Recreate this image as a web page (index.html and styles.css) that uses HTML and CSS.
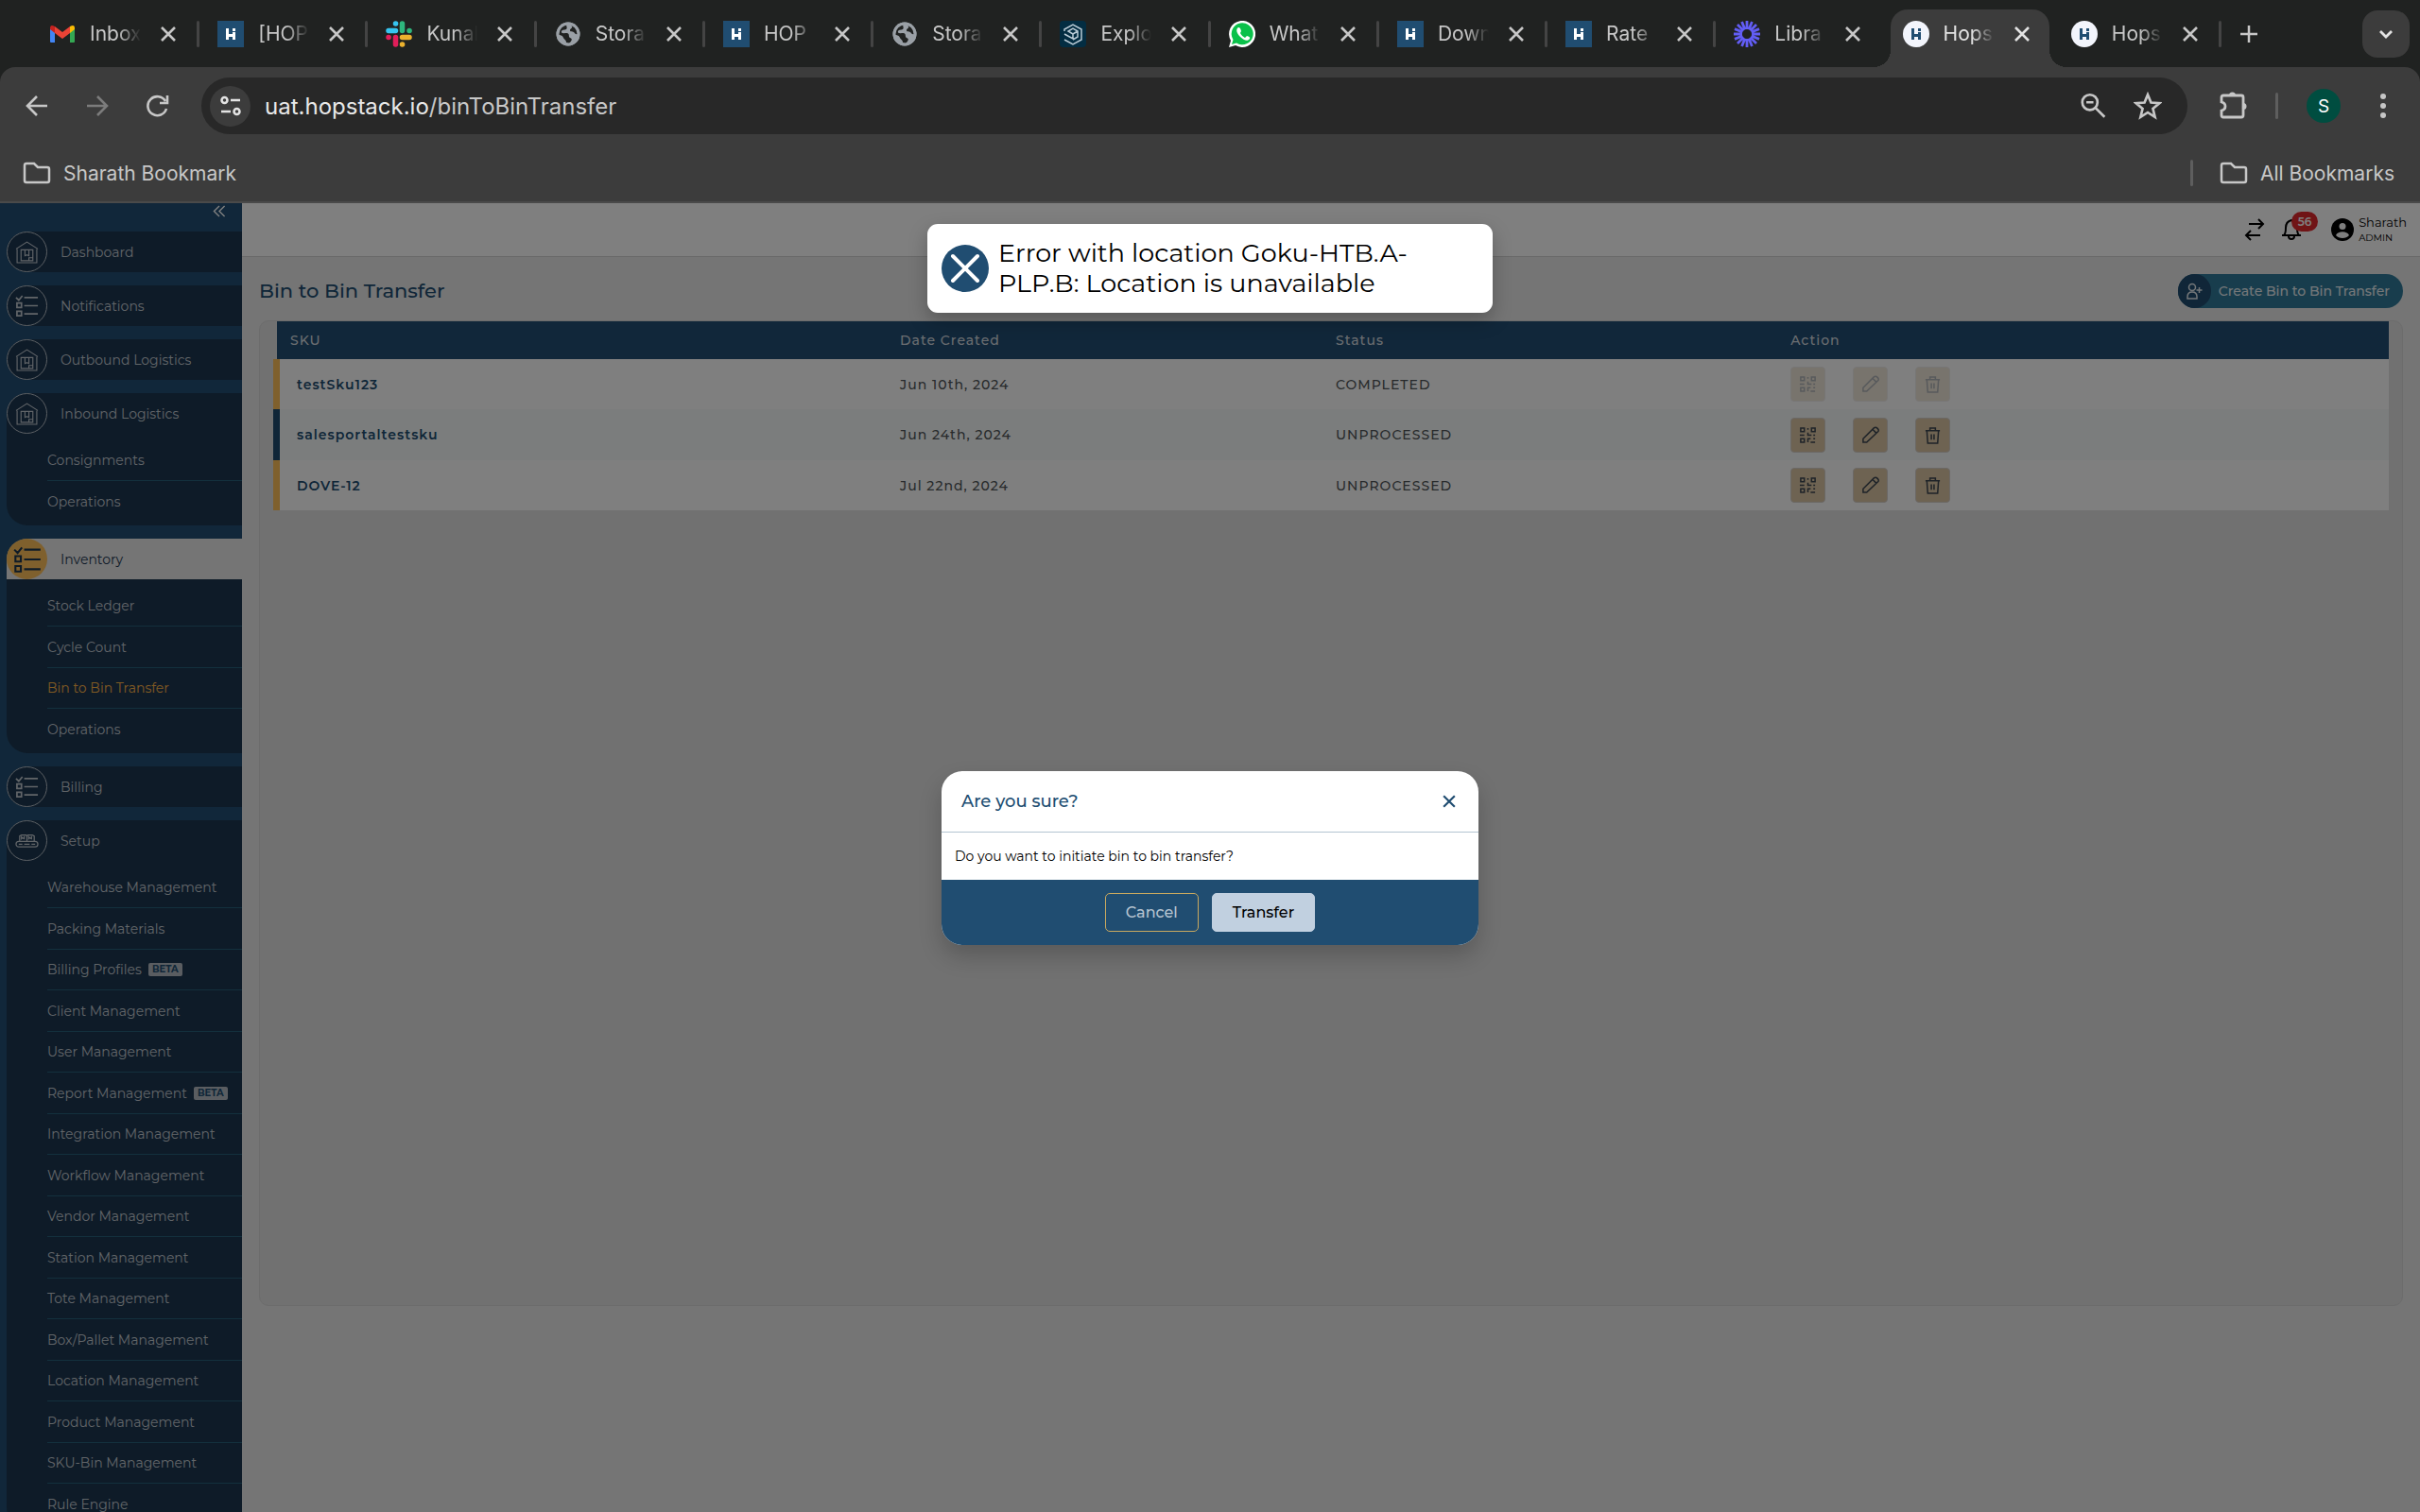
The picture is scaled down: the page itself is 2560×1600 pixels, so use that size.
FILE: index.html
```html
<!DOCTYPE html>
<html lang="en">
<head>
    <meta charset="UTF-8">
    <meta name="viewport" content="width=device-width, initial-scale=1.0">
    <title>Bin to Bin Transfer</title>
    <link rel="stylesheet" href="styles.css">
</head>
<body>

    <!-- icons used more than once -->
    <svg class="sprite" aria-hidden="true">
        <symbol id="hop" viewBox="0 0 28 28">
            <path d="M9 8h3v12H9zM16 12h3v8h-3zM9 14h10v3H9zM16 8h3v3h-3z"/>
        </symbol>
        <symbol id="close" viewBox="0 0 24 24">
            <path d="M5 5l14 14M19 5L5 19" fill="none" stroke="currentColor" stroke-width="2.600"/>
        </symbol>
        <symbol id="globe" viewBox="0 0 28 28">
            <circle cx="14" cy="14" r="12.500" fill="#9aa0a6"/>
            <path d="M13 3c-2 3 1 4-1 6-2 1-4 0-5 2-1 3 3 2 6 2 3 1 1 4 3 5 3 1 2 3-1 6l-3-1c0-3-2-3-3-5-1-3-4-3-5-3-1-6 3-12 9-12zM17 4c5 2 7 6 7 10-2 1-3-1-4-2-2-1-4 0-4-2s3-2 2-4z" fill="#202221"/>
            <circle cx="14" cy="14" r="11" fill="none" stroke="#9aa0a6" stroke-width="3"/>
        </symbol>
        <symbol id="folder" viewBox="0 0 30 24">
            <path d="M2 4q0-2 2-2h8l4 4h10q2 0 2 2v12q0 2-2 2H4q-2 0-2-2z" fill="none" stroke="currentColor" stroke-width="2.500"/>
        </symbol>
        <symbol id="house" viewBox="0 0 24 24">
            <path d="M1 9L12 2l11 7M2 9v14h20V9M6 21V10h12v11zM10 10v6l2-1 2 1v-6M14 18h4v3h-4z" fill="none" stroke="currentColor" stroke-width="1.100"/>
        </symbol>
        <symbol id="list" viewBox="0 0 26 26">
            <path d="M1 4l3 3 4-5M10 4h15M10 13h15M10 22h15M2 10h5v5H2zM2 19h5v5H2z" fill="none" stroke="currentColor" stroke-width="1.800"/>
        </symbol>
        <symbol id="boxes" viewBox="0 0 26 26">
            <rect x="1" y="14" width="24" height="6" rx="3" fill="none" stroke="currentColor" stroke-width="1.300"/>
            <path d="M5 14V8l2-1h5l1 1v6M13 8l1-1h5l2 1v6M7 8v3l1-1 2 1V8M15 8v3l1-1 2 1V8M4 17h4M10 17h6M18 17h4" fill="none" stroke="currentColor" stroke-width="1.300"/>
        </symbol>
        <symbol id="qr" viewBox="0 0 20 20">
            <path d="M2 2h4v4H2zM14 2h4v4h-4zM2 14h4v4H2zM10 2v2M10 7v3h4M1 10h5M16 10h2M10 18v-4h3M16 14h2M13 18h5" fill="none" stroke="currentColor" stroke-width="1.600"/>
        </symbol>
        <symbol id="pencil" viewBox="0 0 20 20">
            <path d="M2 18v-4L14 2q2-1.500 4 .5t.5 3.500L6 18zM12.500 3.500l4 4" fill="none" stroke="currentColor" stroke-width="1.600"/>
        </symbol>
        <symbol id="trash" viewBox="0 0 20 20">
            <path d="M2 5h16M3.500 5l1 14h11l1-14M7 5V2h6v3M8.500 9v6M11.500 9v6" fill="none" stroke="currentColor" stroke-width="1.600"/>
        </symbol>
    </svg>

    <header class="browser">
        <div class="tabstrip">
            <div class="tabs">
                <div class="tab">
                    <svg class="favicon" viewBox="0 0 28 28"><path d="M1 7v15q0 1 1 1h4V12z" fill="#4285f4"/><path d="M27 7v15q0 1-1 1h-4V12z" fill="#34a853"/><path d="M6 6l8 6 8-6v7l-8 6-8-6z" fill="#ea4335"/><path d="M1 8q0-5 5-2v7L1 9z" fill="#c5221f"/><path d="M27 8q0-5-5-2v7l5-4z" fill="#fbbc04"/></svg>
                    <span class="tab-title">Inbox</span>
                    <button class="tab-close" aria-label="Close tab"><svg><use href="#close"/></svg></button>
                </div>
                <div class="tab">
                    <svg class="favicon hop"><use href="#hop"/></svg>
                    <span class="tab-title">[HOP</span>
                    <button class="tab-close" aria-label="Close tab"><svg><use href="#close"/></svg></button>
                </div>
                <div class="tab">
                    <svg class="favicon" viewBox="0 0 28 28" fill="none" stroke-width="5.500" stroke-linecap="round"><path d="M10.500 3h.1M3 10.500h7.500" stroke="#36c5f0"/><path d="M17.500 3v7.500M25 10.500h.1" stroke="#2eb67d"/><path d="M25 17.500h-7.500M17.500 25h.1" stroke="#ecb22e"/><path d="M10.500 25v-7.500M3 17.500h.1" stroke="#e01e5a"/></svg>
                    <span class="tab-title">Kunal</span>
                    <button class="tab-close" aria-label="Close tab"><svg><use href="#close"/></svg></button>
                </div>
                <div class="tab">
                    <svg class="favicon"><use href="#globe"/></svg>
                    <span class="tab-title">Stora</span>
                    <button class="tab-close" aria-label="Close tab"><svg><use href="#close"/></svg></button>
                </div>
                <div class="tab">
                    <svg class="favicon hop"><use href="#hop"/></svg>
                    <span class="tab-title">HOP</span>
                    <button class="tab-close" aria-label="Close tab"><svg><use href="#close"/></svg></button>
                </div>
                <div class="tab">
                    <svg class="favicon"><use href="#globe"/></svg>
                    <span class="tab-title">Stora</span>
                    <button class="tab-close" aria-label="Close tab"><svg><use href="#close"/></svg></button>
                </div>
                <div class="tab">
                    <svg class="favicon" viewBox="0 0 28 28"><rect width="28" height="28" rx="4" fill="#032d42"/><path d="M5 11v-2l9-5 9 5v11l-9 5-9-5M5 14l9 5v-5l-5-3 5-3 5 3v6l-5 3M14 14l5-3" fill="none" stroke="#b9cbd6" stroke-width="1.500"/></svg>
                    <span class="tab-title">Explo</span>
                    <button class="tab-close" aria-label="Close tab"><svg><use href="#close"/></svg></button>
                </div>
                <div class="tab">
                    <svg class="favicon" viewBox="0 0 28 28"><path d="M0 28l2-7A14 14 0 1 1 7 26z" fill="#fff"/><path d="M3 25l1.500-5A11.500 11.500 0 1 1 8 23.500z" fill="#0ac14a"/><path d="M10 7c-3 2-2 6 2 10s8 5 10 2c1-2-1-2-3-3l-2 2c-2-1-4-3-5-5l1-2c-1-3-1-4-3-4z" fill="#fff"/></svg>
                    <span class="tab-title">What</span>
                    <button class="tab-close" aria-label="Close tab"><svg><use href="#close"/></svg></button>
                </div>
                <div class="tab">
                    <svg class="favicon hop"><use href="#hop"/></svg>
                    <span class="tab-title">Down</span>
                    <button class="tab-close" aria-label="Close tab"><svg><use href="#close"/></svg></button>
                </div>
                <div class="tab">
                    <svg class="favicon hop"><use href="#hop"/></svg>
                    <span class="tab-title">Rate</span>
                    <button class="tab-close" aria-label="Close tab"><svg><use href="#close"/></svg></button>
                </div>
                <div class="tab">
                    <svg class="favicon" viewBox="0 0 28 28" stroke="#625df5" stroke-width="2.800"><path d="M14 0v9M14 19v9M0 14h9M19 14h9M4 4l6.500 6.500M17.500 17.500L24 24M24 4l-6.500 6.500M10.500 17.500L4 24M8.600 1l3.400 8.400M16 18.600l3.400 8.400M1 8.600l8.400 3.400M18.600 16l8.400 3.400M19.400 1L16 9.400M12 18.600L8.600 27M27 8.600L18.600 12M9.400 16L1 19.400"/></svg>
                    <span class="tab-title">Libra</span>
                    <button class="tab-close" aria-label="Close tab"><svg><use href="#close"/></svg></button>
                </div>
                <div class="tab active">
                    <svg class="favicon hop round"><use href="#hop"/></svg>
                    <span class="tab-title">Hops</span>
                    <button class="tab-close" aria-label="Close tab"><svg><use href="#close"/></svg></button>
                </div>
                <div class="tab">
                    <svg class="favicon hop round"><use href="#hop"/></svg>
                    <span class="tab-title">Hops</span>
                    <button class="tab-close" aria-label="Close tab"><svg><use href="#close"/></svg></button>
                </div>
            </div>
            <div class="tabs-end">
                <button class="new-tab" aria-label="New tab"><svg viewBox="0 0 20 20"><path d="M10 1v18M1 10h18" stroke="currentColor" stroke-width="2.500"/></svg></button>
                <button class="tab-search" aria-label="Search tabs"><svg viewBox="0 0 20 20"><path d="M4 7l6 6 6-6" fill="none" stroke="currentColor" stroke-width="2.800"/></svg></button>
            </div>
        </div>

        <div class="toolbar">
            <nav class="nav-buttons">
                <button aria-label="Back"><svg viewBox="0 0 24 24"><path d="M23 12H3M12 2L2 12l10 10"/></svg></button>
                <button class="off" aria-label="Forward"><svg viewBox="0 0 24 24"><path d="M1 12h20M12 2l10 10-10 10"/></svg></button>
                <button aria-label="Reload"><svg viewBox="0 0 24 24"><path d="M21 15a10 10 0 1 1-1-8M22 1v8h-8"/></svg></button>
            </nav>
            <div class="omnibox">
                <button class="site-info" aria-label="Site information"><svg viewBox="0 0 22 22" fill="none" stroke="currentColor" stroke-width="2.500"><circle cx="4.500" cy="5" r="3"/><path d="M11 5h10M1 17h10"/><circle cx="17.500" cy="17" r="3"/></svg></button>
                <p class="url">uat.hopstack.io<span>/binToBinTransfer</span></p>
                <button aria-label="Zoom"><svg viewBox="0 0 28 28"><circle cx="11" cy="10.500" r="7.500"/><path d="M16.500 16l9 9M7.500 10.500h7"/></svg></button>
                <button aria-label="Bookmark"><svg viewBox="0 0 28 28"><path d="M14 3l3.200 7.800 8.300.6-6.400 5.400 2 8.200-7.100-4.500L6.900 25l2-8.200-6.400-5.400 8.300-.6z"/></svg></button>
            </div>
            <button class="extensions" aria-label="Extensions"><svg viewBox="0 0 30 30"><path d="M3 6q0-2 2-2h19q2 0 2 2v19q0 2-2 2H5q-2 0-2-2v-5q4-1 4-4.500T3 11z" fill="none" stroke="currentColor" stroke-width="2.800"/><path d="M11 4a3.500 3.500 0 0 1 7 0zM26 12a3.500 3.500 0 0 1 0 7z" fill="currentColor"/></svg></button>
            <span class="divider"></span>
            <button class="avatar">S</button>
            <button class="menu" aria-label="Menu"><svg viewBox="0 0 8 28"><circle cx="4" cy="4" r="3"/><circle cx="4" cy="14" r="3"/><circle cx="4" cy="24" r="3"/></svg></button>
        </div>

        <div class="bookmarks">
            <button><svg><use href="#folder"/></svg>Sharath Bookmark</button>
            <span class="divider"></span>
            <button><svg><use href="#folder"/></svg>All Bookmarks</button>
        </div>
    </header>

    <div class="app">
        <aside class="sidebar">
            <button class="collapse" aria-label="Collapse"><svg viewBox="0 0 14 14"><path d="M7 1L1 7l6 6M13 1L7 7l6 6" fill="none" stroke="currentColor" stroke-width="1.500"/></svg></button>

            <section class="group">
                <a class="group-head" href="#"><span class="circle"><svg><use href="#house"/></svg></span>Dashboard</a>
            </section>
            <section class="group">
                <a class="group-head" href="#"><span class="circle"><svg><use href="#list"/></svg></span>Notifications</a>
            </section>
            <section class="group">
                <a class="group-head" href="#"><span class="circle"><svg><use href="#house"/></svg></span>Outbound Logistics</a>
            </section>
            <section class="group">
                <a class="group-head" href="#"><span class="circle"><svg><use href="#house"/></svg></span>Inbound Logistics</a>
                <ul>
                    <li><a href="#">Consignments</a></li>
                    <li><a href="#">Operations</a></li>
                </ul>
            </section>
            <section class="group open">
                <a class="group-head" href="#"><span class="circle"><svg><use href="#list"/></svg></span>Inventory</a>
                <ul>
                    <li><a href="#">Stock Ledger</a></li>
                    <li><a href="#">Cycle Count</a></li>
                    <li><a class="current" href="#">Bin to Bin Transfer</a></li>
                    <li><a href="#">Operations</a></li>
                </ul>
            </section>
            <section class="group">
                <a class="group-head" href="#"><span class="circle"><svg><use href="#list"/></svg></span>Billing</a>
            </section>
            <section class="group">
                <a class="group-head" href="#"><span class="circle"><svg><use href="#boxes"/></svg></span>Setup</a>
                <ul>
                    <li><a href="#">Warehouse Management</a></li>
                    <li><a href="#">Packing Materials</a></li>
                    <li><a href="#">Billing Profiles</a><span class="beta">BETA</span></li>
                    <li><a href="#">Client Management</a></li>
                    <li><a href="#">User Management</a></li>
                    <li><a href="#">Report Management</a><span class="beta">BETA</span></li>
                    <li><a href="#">Integration Management</a></li>
                    <li><a href="#">Workflow Management</a></li>
                    <li><a href="#">Vendor Management</a></li>
                    <li><a href="#">Station Management</a></li>
                    <li><a href="#">Tote Management</a></li>
                    <li><a href="#">Box/Pallet Management</a></li>
                    <li><a href="#">Location Management</a></li>
                    <li><a href="#">Product Management</a></li>
                    <li><a href="#">SKU-Bin Management</a></li>
                    <li><a href="#">Rule Engine</a></li>
                </ul>
            </section>
        </aside>

        <main class="content">
            <div class="topbar">
                <button class="swap" aria-label="Switch"><svg viewBox="0 0 22 24"><path d="M5 6h15M15 1l5 5-5 5M17 18H2M7 13l-5 5 5 5"/></svg></button>
                <button class="bell" aria-label="Alerts"><svg viewBox="0 0 22 24"><path d="M1 18h20M3 18c2-2 2-4 2-8 0-5 2-7 6-8 4 1 6 3 6 8 0 4 0 6 2 8M8 19q0 3 3 3t3-3"/></svg><span class="count">56</span></button>
                <svg class="account" viewBox="0 0 24 24"><circle cx="12" cy="12" r="12"/><circle cx="12" cy="8.500" r="3.500" fill="#fff"/><path d="M5 18c2-5 12-5 14 0-3 4-11 4-14 0z" fill="#fff"/></svg>
                <div class="user">
                    <p class="user-name">Sharath</p>
                    <p class="user-role">ADMIN</p>
                </div>
            </div>

            <div class="page-head">
                <h1>Bin to Bin Transfer</h1>
                <button class="create"><span class="create-icon"><svg viewBox="0 0 18 18"><circle cx="7" cy="5" r="3.500"/><path d="M2 17v-2q0-5 5-5t5 5v2zM14.500 5v6M11.500 8h6"/></svg></span>Create Bin to Bin Transfer</button>
            </div>

            <div class="panel">
                <table>
                    <thead>
                        <tr>
                            <th class="col-sku">SKU</th>
                            <th class="col-date">Date Created</th>
                            <th class="col-status">Status</th>
                            <th>Action</th>
                        </tr>
                    </thead>
                    <tbody>
                        <tr>
                            <td class="sku">testSku123</td>
                            <td>Jun 10th, 2024</td>
                            <td>COMPLETED</td>
                            <td><div class="actions">
                                <button disabled aria-label="Scan"><svg><use href="#qr"/></svg></button>
                                <button disabled aria-label="Edit"><svg><use href="#pencil"/></svg></button>
                                <button disabled aria-label="Delete"><svg><use href="#trash"/></svg></button>
                            </div></td>
                        </tr>
                        <tr>
                            <td class="sku">salesportaltestsku</td>
                            <td>Jun 24th, 2024</td>
                            <td>UNPROCESSED</td>
                            <td><div class="actions">
                                <button aria-label="Scan"><svg><use href="#qr"/></svg></button>
                                <button aria-label="Edit"><svg><use href="#pencil"/></svg></button>
                                <button aria-label="Delete"><svg><use href="#trash"/></svg></button>
                            </div></td>
                        </tr>
                        <tr>
                            <td class="sku">DOVE-12</td>
                            <td>Jul 22nd, 2024</td>
                            <td>UNPROCESSED</td>
                            <td><div class="actions">
                                <button aria-label="Scan"><svg><use href="#qr"/></svg></button>
                                <button aria-label="Edit"><svg><use href="#pencil"/></svg></button>
                                <button aria-label="Delete"><svg><use href="#trash"/></svg></button>
                            </div></td>
                        </tr>
                    </tbody>
                </table>
            </div>
        </main>

        <div class="overlay">
            <div class="modal" role="dialog" aria-labelledby="modal-title">
                <div class="modal-head">
                    <h2 id="modal-title">Are you sure?</h2>
                    <button aria-label="Close"><svg><use href="#close"/></svg></button>
                </div>
                <p class="modal-body">Do you want to initiate bin to bin transfer?</p>
                <div class="modal-foot">
                    <button class="cancel">Cancel</button>
                    <button class="confirm">Transfer</button>
                </div>
            </div>
        </div>

        <div class="toast" role="alert">
            <svg viewBox="0 0 50 50"><circle cx="25" cy="25" r="25" fill="#204d71"/><path d="M12 12l26 26M38 12L12 38" stroke="#fff" stroke-width="4" stroke-linecap="round"/></svg>
            <p>Error with location Goku-HTB.A-<br>PLP.B: Location is unavailable</p>
        </div>
    </div>

</body>
</html>
```
FILE: styles.css
```css
* {
    box-sizing: border-box;
}

body {
    margin: 0;
    height: 100vh;
    display: flex;
    flex-direction: column;
    overflow: hidden;
    font-family: Montserrat, Inter, sans-serif;
    font-size: 14px;
    color: #000;
}

h1, h2, p, ul {
    margin: 0;
    padding: 0;
}

button {
    font: inherit;
    color: inherit;
    background: none;
    border: none;
    padding: 0;
    display: flex;
    align-items: center;
    justify-content: center;
}

a {
    color: inherit;
    text-decoration: none;
}

.sprite {
    position: absolute;
    width: 0;
    height: 0;
}

/* browser bars */

.browser {
    flex: none;
    background: #202221;
    color: #c7c7c7;
    font-family: Inter, sans-serif;
    font-size: 21px;
}

.tabstrip {
    height: 71px;
    display: flex;
    padding-left: 33px;
}

.tabs {
    flex: 1;
    display: flex;
}

.tab {
    flex: 1 1 0;
    position: relative;
    z-index: 0;
    display: flex;
    align-items: center;
    padding-left: 19px;
}

.tab::after {
    content: "";
    position: absolute;
    right: 0;
    top: 22px;
    width: 3px;
    height: 28px;
    border-radius: 2px;
    background: #444;
}

.favicon {
    width: 28px;
    height: 28px;
    flex: none;
}

.hop {
    background: #204d71;
    fill: #fff;
}

.hop.round {
    background: #f3f5fc;
    fill: #204d71;
    border-radius: 50%;
}

.tab-title {
    width: 54px;
    margin-left: 15px;
    overflow: hidden;
    white-space: nowrap;
    -webkit-mask-image: linear-gradient(to right, #000 55%, transparent);
    mask-image: linear-gradient(to right, #000 55%, transparent);
}

.tab-close {
    margin-left: 17px;
}

.tab-close svg {
    width: 24px;
    height: 24px;
}

.tab.active {
    color: #e3e3e3;
}

.tab.active::before {
    content: "";
    position: absolute;
    z-index: -1;
    inset: 10px 4px 0 6px;
    border-radius: 18px 18px 0 0;
    background: #3c3c3c;
}

/* flared feet of the open tab */
.tab.active::after {
    z-index: -1;
    left: -12px;
    right: -14px;
    top: 53px;
    width: auto;
    height: 18px;
    border-radius: 0;
    background:
        radial-gradient(circle at 0 0, transparent 18px, #3c3c3c 18px) left / 18px 18px no-repeat,
        radial-gradient(circle at 100% 0, transparent 18px, #3c3c3c 18px) right / 18px 18px no-repeat;
}

.tab:has(+ .active)::after {
    display: none;
}

.tabs-end {
    width: 210px;
    display: flex;
    align-items: center;
    justify-content: space-between;
    padding: 0 11px 0 19px;
}

.new-tab svg {
    width: 20px;
    height: 20px;
}

.tab-search {
    width: 50px;
    height: 50px;
    border-radius: 16px;
    background: #3c3c3c;
    color: #e3e3e3;
}

.tab-search svg {
    width: 20px;
    height: 20px;
}

.toolbar {
    display: flex;
    align-items: center;
    height: 82px;
    padding: 0 35px 0 27px;
    background: #3c3c3c;
    border-radius: 16px 16px 0 0;
}

.nav-buttons {
    display: flex;
    gap: 40px;
    margin-right: 34px;
}

.nav-buttons svg {
    width: 24px;
    height: 24px;
    fill: none;
    stroke: currentColor;
    stroke-width: 2.6;
}

.nav-buttons .off {
    color: #7c7c7c;
}

.omnibox {
    flex: 1;
    display: flex;
    align-items: center;
    gap: 28px;
    height: 60px;
    padding: 0 27px 0 9px;
    border-radius: 30px;
    background: #282828;
}

.omnibox svg {
    width: 30px;
    height: 30px;
    fill: none;
    stroke: currentColor;
    stroke-width: 2.5;
}

.omnibox .site-info {
    width: 43px;
    height: 43px;
    margin-right: -13px;
    border-radius: 50%;
    background: #3c3c3c;
    color: #e3e3e3;
}

.omnibox .site-info svg {
    width: 22px;
    height: 22px;
}

.url {
    flex: 1;
    font-size: 24px;
    color: #e8e8e8;
}

.url span {
    color: #c7c7c7;
}

.extensions {
    margin-left: 33px;
}

.extensions svg {
    width: 30px;
    height: 30px;
}

.divider {
    width: 3px;
    height: 28px;
    border-radius: 2px;
    background: #5e5e5e;
}

.toolbar .divider {
    margin: 0 30px;
}

.avatar {
    width: 36px;
    height: 36px;
    border-radius: 50%;
    background: #004d40;
    color: #fff;
    font-size: 19px;
}

.menu {
    margin-left: 41px;
}

.menu svg {
    width: 8px;
    height: 28px;
    fill: currentColor;
}

.bookmarks {
    display: flex;
    align-items: center;
    height: 62px;
    padding: 0 27px 0 24px;
    background: #3c3c3c;
    border-bottom: 2px solid #4a4a4a;
}

.bookmarks button {
    gap: 13px;
}

.bookmarks svg {
    width: 30px;
    height: 24px;
}

.bookmarks .divider {
    margin: 0 28px 0 auto;
}

/* application */

.app {
    flex: 1;
    min-height: 0;
    position: relative;
    display: flex;
    background: #eaeaea;
}

.sidebar {
    width: 256px;
    flex: none;
    overflow: hidden;
    padding-left: 7px;
    background: #234f74;
    color: #c3cad1;
}

.collapse {
    height: 16px;
    margin: 0 17px 14px auto;
    color: #fff;
}

.collapse svg {
    width: 14px;
    height: 13px;
}

.group {
    margin-bottom: 14px;
    background: #1c3650;
    border-radius: 22px 0 0 22px;
}

.group-head {
    display: flex;
    align-items: center;
    gap: 14px;
    height: 43px;
}

.circle {
    display: flex;
    align-items: center;
    justify-content: center;
    width: 43px;
    height: 43px;
    border: 1px solid #b8c0c8;
    border-radius: 50%;
    background: #1c3650;
}

.circle svg {
    width: 25px;
    height: 25px;
}

.group ul {
    list-style: none;
    padding: 7px 0 3px 43px;
}

.group li {
    display: flex;
    align-items: center;
    gap: 7px;
    height: 44px;
    border-bottom: 1px solid #26607b;
}

.group li:nth-child(odd) {
    height: 43px;
}

.group li:last-child {
    border-bottom: none;
}

.open .group-head {
    background: #eaeaea;
    color: #1c3650;
    border-radius: 22px 0 0 0;
}

.open .circle {
    border: none;
    background: #ffc05a;
}

.open .circle svg {
    width: 30px;
    height: 30px;
}

.group .current {
    color: #ffb547;
}

.beta {
    padding: 0 4px;
    border-radius: 2px;
    background: #b4bbc2;
    color: #204d71;
    font-size: 10px;
    font-weight: 700;
    line-height: 14px;
}

.content {
    flex: 1;
    min-width: 0;
}

.topbar {
    display: flex;
    align-items: center;
    justify-content: flex-end;
    height: 57px;
    padding-right: 14px;
    background: #fff;
    border-bottom: 1px solid #d0d0d0;
}

.topbar button svg {
    width: 22px;
    height: 24px;
    fill: none;
    stroke: #000;
    stroke-width: 2;
}

.bell {
    position: relative;
    margin: 0 31px 0 17px;
}

.count {
    position: absolute;
    left: 11px;
    top: -7px;
    width: 28px;
    border-radius: 11px;
    background: #e0282c;
    color: #fff;
    font-size: 12px;
    font-weight: 600;
    line-height: 21px;
}

.account {
    width: 24px;
    height: 24px;
}

.user {
    margin-left: 5px;
}

.user-name {
    font-size: 13px;
    line-height: 18px;
}

.user-role {
    font-size: 10px;
    line-height: 16px;
}

.page-head {
    display: flex;
    align-items: center;
    justify-content: space-between;
    height: 67px;
    padding: 4px 18px 0;
}

h1 {
    font-size: 21px;
    font-weight: 500;
    color: #204d71;
}

.create {
    height: 36px;
    gap: 8px;
    padding-right: 14px;
    border-radius: 18px;
    background: #307b9b;
    color: #e8eef2;
    font-weight: 500;
}

.create-icon {
    display: flex;
    align-items: center;
    justify-content: center;
    width: 35px;
    height: 36px;
    border-radius: 18px;
    background: #204d71;
}

.create svg {
    width: 18px;
    height: 18px;
    fill: none;
    stroke: #e8eef2;
    stroke-width: 1.5;
}

.panel {
    min-height: 1043px;
    margin: 0 18px;
    padding: 0 14px;
    border: 1px solid #d8d8d8;
    border-radius: 10px;
    background: #e2e2e2;
}

table {
    width: 100%;
    border-collapse: separate;
    border-spacing: 0;
    table-layout: fixed;
}

th, td {
    text-align: left;
    padding: 0 14px;
    letter-spacing: 1px;
}

th {
    height: 40px;
    background: #234f74;
    background-clip: padding-box;
    color: #d5dbe0;
    font-weight: 500;
}

th:first-child {
    border-left: 4px solid transparent;
}

.col-sku {
    width: 29%;
}

.col-date {
    width: 20.6%;
}

.col-status {
    width: 21.5%;
}

td {
    height: 53px;
    background: #fff;
    color: #505558;
    font-weight: 500;
}

tbody tr:nth-child(even) td {
    height: 54px;
    background: #f6fbfa;
}

.sku {
    padding-left: 18px;
    border-left: 7px solid #ffc05a;
    color: #204d71;
    font-weight: 600;
}

tbody tr:nth-child(even) .sku {
    border-left-color: #204d71;
}

.actions {
    display: flex;
    gap: 29px;
}

.actions button {
    width: 37px;
    height: 37px;
    border: 1px solid #d6d0cb;
    border-radius: 4px;
    background: #dcc6a4;
    color: #3c4650;
}

.actions button:disabled {
    opacity: 0.4;
}

.actions svg {
    width: 19px;
    height: 19px;
}

/* confirm dialog */

.overlay {
    position: absolute;
    inset: 0;
    display: flex;
    align-items: center;
    justify-content: center;
    background: rgba(0, 0, 0, 0.5);
}

.modal {
    width: 568px;
    border-radius: 22px;
    overflow: hidden;
    background: #fff;
    box-shadow: 0 12px 24px rgba(0, 0, 0, 0.2);
}

.modal-head {
    display: flex;
    align-items: center;
    justify-content: space-between;
    height: 65px;
    padding: 0 21px;
    border-bottom: 1px solid #b4c4d2;
    color: #204d71;
}

h2 {
    font-size: 18px;
    font-weight: 500;
}

.modal-head svg {
    width: 20px;
    height: 20px;
}

.modal-body {
    padding: 14px;
    line-height: 22px;
}

.modal-foot {
    display: flex;
    justify-content: center;
    gap: 14px;
    padding: 14px;
    background: #204d71;
}

.modal-foot button {
    height: 41px;
    padding: 0 21px;
    border: 1px solid #c1d0e0;
    border-radius: 5px;
    font-size: 16px;
    font-weight: 500;
}

.modal-foot .cancel {
    border-color: #c9a95f;
    color: #b5c3d0;
}

.modal-foot .confirm {
    background: #c1d0e0;
}

.toast {
    position: absolute;
    top: 22px;
    left: 50%;
    transform: translateX(-50%);
    display: flex;
    align-items: center;
    gap: 10px;
    width: 598px;
    padding: 15px;
    border-radius: 11px;
    background: #fff;
    box-shadow: 0 8px 20px rgba(0, 0, 0, 0.25);
    font-size: 27px;
    line-height: 32px;
}

.toast svg {
    width: 50px;
    height: 50px;
    flex: none;
}
```
